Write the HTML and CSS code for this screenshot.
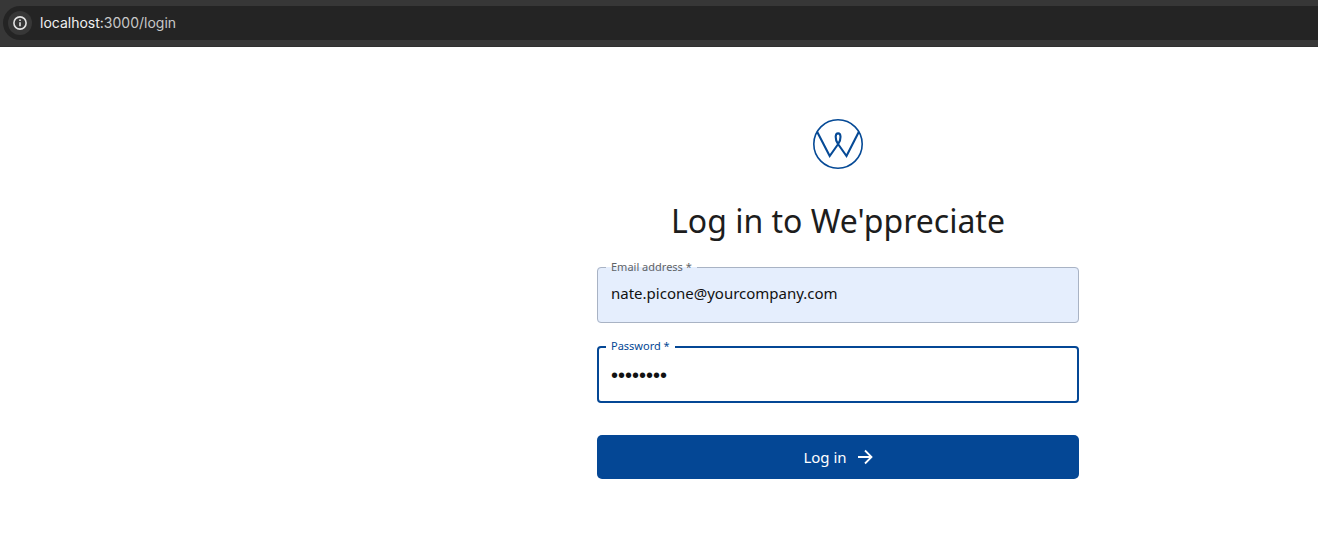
FILE: index.html
```html
<!DOCTYPE html>
<html lang="en">
<head>
<meta charset="utf-8">
<meta name="viewport" content="width=device-width, initial-scale=1">
<title>Log in to We'ppreciate</title>
<link rel="stylesheet" href="styles.css">
</head>
<body>
<header class="browser-bar">
  <div class="address">
    <button class="site-info" type="button" aria-label="View site information">
      <svg width="14" height="14" viewBox="0 0 14 14" fill="none" stroke="currentColor" stroke-width="1.6" aria-hidden="true">
        <circle cx="7" cy="7" r="6.1"/>
        <path d="M7 6.3v4M7 3.5v1.6"/>
      </svg>
    </button>
    <span class="url"><span class="host">localhost:</span>3000/login</span>
  </div>
</header>
<main class="page">
  <form class="login">
    <svg class="logo" width="50" height="50" viewBox="0 0 50 50" fill="none" stroke="currentColor" role="img" aria-label="We'ppreciate">
      <circle cx="25" cy="25" r="24.2" stroke-width="1.6"/>
      <path d="M4 12.500L16.700 37L25.200 25C28.600 20 28 14.400 25.100 14.400C22.200 14.400 21.600 20 25 25L33.500 37L46 12.500" stroke-width="2.1"/>
    </svg>
    <h1 class="title">Log in to We'ppreciate</h1>
    <fieldset class="field field-filled">
      <legend class="legend"><label for="email">Email address *</label></legend>
      <input class="input" id="email" type="email" value="nate.picone@yourcompany.com" required>
    </fieldset>
    <fieldset class="field field-active">
      <legend class="legend"><label for="password">Password *</label></legend>
      <input class="input input-password" id="password" type="password" value="password" required>
    </fieldset>
    <button class="submit" type="submit">
      Log in
      <svg width="16" height="16" viewBox="0 0 16 16" fill="none" stroke="currentColor" stroke-width="1.8" aria-hidden="true">
        <path d="M1 8h13M8 1.500L14.500 8L8 14.500"/>
      </svg>
    </button>
  </form>
</main>
</body>
</html>
```
FILE: styles.css
```css
* {
  box-sizing: border-box;
}

body {
  margin: 0;
  background: #fff;
  color: #1d1d1d;
  font-family: "Noto Sans", sans-serif;
}

.browser-bar {
  padding: 6px 0 6px 3px;
  background: #373737;
  border-bottom: 1px solid #303030;
}

.address {
  display: flex;
  align-items: center;
  gap: 8px;
  height: 34px;
  padding-left: 5px;
  border-radius: 17px 0 0 17px;
  background: #242424;
}

.site-info {
  display: flex;
  align-items: center;
  justify-content: center;
  width: 24px;
  height: 24px;
  padding: 0;
  border: 0;
  border-radius: 50%;
  background: #373737;
  color: #e3e3e3;
}

.url {
  color: #c8c8c8;
  font: 14px/20px Inter, sans-serif;
}

.host {
  color: #f0f0f0;
}

.page {
  display: flex;
  justify-content: center;
  padding: 72px 0 72px 358px;
}

.login {
  display: flex;
  flex-direction: column;
  width: 100%;
  max-width: 482px;
}

.logo {
  align-self: center;
  color: #064a96;
}

.title {
  margin: 32px 0 20px;
  font-size: 32px;
  font-weight: 400;
  line-height: 40px;
  text-align: center;
}

.field {
  min-width: 0;
  margin: 0;
  padding: 0 12px 10px 8px;
  border: 1px solid #a9b3c4;
  border-radius: 4px;
}

.field-filled {
  background: #e5eefd;
  color: #5f6368;
}

.field-active {
  margin-top: 17px;
  padding-left: 7px;
  border: 2px solid #044795;
  color: #044795;
}

.legend {
  padding: 0 5px 2px;
  font-size: 11px;
  line-height: 11px;
}

.input {
  display: block;
  width: 100%;
  height: 38px;
  padding: 0 5px;
  border: 0;
  outline: 0;
  background: transparent;
  color: #111;
  font: 15px/24px "Noto Sans", sans-serif;
}

.input-password {
  padding-top: 6px;
  font: 20px/24px "Liberation Sans", sans-serif;
}

.submit {
  display: flex;
  align-items: center;
  justify-content: center;
  gap: 10px;
  height: 44px;
  margin-top: 32px;
  padding-bottom: 2px;
  border: 0;
  border-radius: 5px;
  background: #044795;
  color: #fff;
  font: 15px/24px "Noto Sans", sans-serif;
}
```
